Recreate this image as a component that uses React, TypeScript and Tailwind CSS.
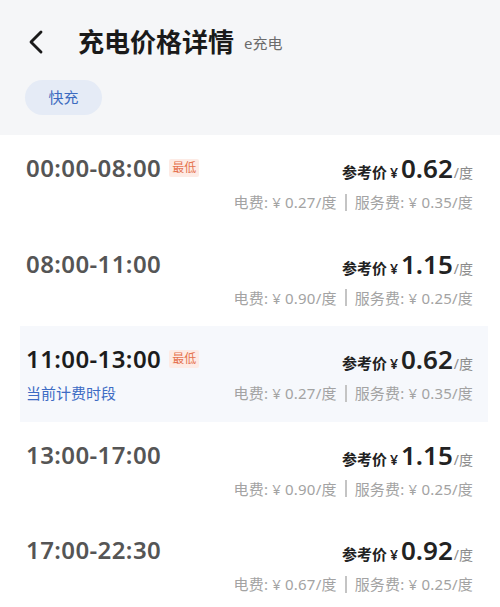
import { ChevronLeft } from "lucide-react";

type Slot = {
  time: string;
  price: string;
  power: string;
  service: string;
  lowest?: boolean;
  current?: boolean;
};

const SLOTS: Slot[] = [
  { time: "00:00-08:00", price: "0.62", power: "0.27", service: "0.35", lowest: true },
  { time: "08:00-11:00", price: "1.15", power: "0.90", service: "0.25" },
  { time: "11:00-13:00", price: "0.62", power: "0.27", service: "0.35", lowest: true, current: true },
  { time: "13:00-17:00", price: "1.15", power: "0.90", service: "0.25" },
  { time: "17:00-22:30", price: "0.92", power: "0.67", service: "0.25" },
];

function Row({ slot }: { slot: Slot }) {
  return (
    <div
      className={
        "ml-[20px] mr-[12px] h-[95.5px] pl-[6px] pr-[15px] pt-[17px] " +
        (slot.current ? "bg-[#f6f8fc]" : "")
      }
    >
      {/* time + reference price */}
      <div className="flex h-[32px] items-center justify-between">
        <div className="flex items-center gap-[8px]">
          <span
            className={
              "text-[24px] font-semibold leading-[32px] tracking-[0.4px] " +
              (slot.current ? "text-[#1c1c1c]" : "text-[#555555]")
            }
          >
            {slot.time}
          </span>
          {slot.lowest && (
            <span className="rounded-[2px] bg-[#fdebe5] px-[3px] text-[12px] leading-[18px] text-[#e5734f]">
              最低
            </span>
          )}
        </div>
        <div className="flex items-baseline text-[#222222]">
          <span className="text-[15px] font-semibold">参考价</span>
          <span className="ml-[3px] text-[14px] font-semibold">¥</span>
          <span className="ml-[3px] text-[26px] font-semibold leading-[32px]">{slot.price}</span>
          <span className="ml-[1px] text-[14px] text-[#8a8a8a]">/度</span>
        </div>
      </div>

      {/* breakdown */}
      <div className="mt-[7px] flex h-[22px] items-center justify-between">
        <span className="text-[15px] leading-[22px] text-[#3d6bc4]">
          {slot.current ? "当前计费时段" : ""}
        </span>
        <div className="flex items-center text-[15px] leading-[22px] tracking-[0.2px] text-[#a3a3a3]">
          <span>电费: ¥ {slot.power}/度</span>
          <span className="mx-[8px] h-[17px] w-[2px] bg-[#c4c4c4]" />
          <span>服务费: ¥ {slot.service}/度</span>
        </div>
      </div>
    </div>
  );
}

export default function App() {
  return (
    <div
      className="h-[607px] w-[500px] overflow-hidden bg-white"
      style={{ fontFamily: '"Noto Sans", "Noto Sans CJK SC", sans-serif' }}
    >
      {/* header */}
      <div className="h-[135px] bg-[#f5f6f8] px-[25px] pt-[22px]">
        <div className="flex h-[40px] items-center">
          <ChevronLeft className="-ml-[9px] h-[40px] w-[40px] text-[#1a1a1a]" strokeWidth={1.7} />
          <span className="ml-[22px] text-[26px] font-bold text-[#1a1a1a]">充电价格详情</span>
          <span className="ml-[10px] mt-[2px] text-[15px] text-[#6b6b6b]">e充电</span>
        </div>
        <div className="mt-[18px] flex h-[35px] w-[77px] items-center justify-center rounded-full bg-[#e5ebf6] text-[15px] text-[#3d6bc0]">
          快充
        </div>
      </div>

      {/* price slots */}
      <div>
        {SLOTS.map((s) => (
          <Row key={s.time} slot={s} />
        ))}
      </div>
    </div>
  );
}
